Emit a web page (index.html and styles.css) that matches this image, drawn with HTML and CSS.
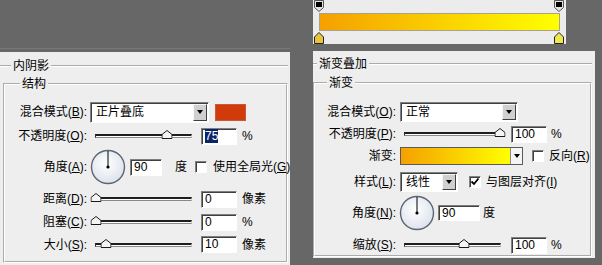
FILE: index.html
```html
<!DOCTYPE html>
<html lang="zh-CN">
<head>
<meta charset="utf-8">
<title>图层样式</title>
<link rel="stylesheet" href="styles.css">
</head>
<body>
<div class="lcol">
  <div class="panel left">
    <fieldset class="outer">
      <legend>内阴影</legend>
      <fieldset class="group">
        <legend>结构</legend>
        <div class="rows">
          <div class="row l1">
            <span class="lbl">混合模式(<u>B</u>):</span>
            <div class="dd dd-blend"><span class="dd-text">正片叠底</span><span class="dd-btn"></span></div>
            <span class="swatch"></span>
          </div>
          <div class="row l2">
            <span class="lbl">不透明度(<u>O</u>):</span>
            <div class="slider"><svg class="thumb" style="left:75%" width="11" height="9" viewBox="0 0 11 9"><path d="M5.5 .5 10.5 4.5V8.5H.5V4.5Z" fill="#f4f4f4" stroke="#1a1a1a"/></svg></div>
            <div class="field num"><span class="sel">75</span></div>
            <span class="unit">%</span>
          </div>
          <div class="row l3">
            <span class="lbl">角度(<u>A</u>):</span>
            <svg class="dial" width="36" height="36" viewBox="0 0 36 36"><defs><radialGradient id="dg1" cx="45%" cy="40%" r="60%"><stop offset="0" stop-color="#ffffff"/><stop offset="1" stop-color="#dde3ec"/></radialGradient></defs><circle cx="18" cy="18" r="16.5" fill="url(#dg1)" stroke="#5b6575" stroke-width="1.4"/><path d="M18 18V2" stroke="#000"/><circle cx="18" cy="18" r="1.6"/></svg>
            <div class="field ang"><span>90</span></div>
            <span class="deg">度</span>
            <span class="cb cb-global"></span>
            <span class="cbl">使用全局光(<u>G</u>)</span>
          </div>
          <div class="row l4">
            <span class="lbl">距离(<u>D</u>):</span>
            <div class="slider"><svg class="thumb" style="left:0%" width="11" height="9" viewBox="0 0 11 9"><path d="M5.5 .5 10.5 4.5V8.5H.5V4.5Z" fill="#f4f4f4" stroke="#1a1a1a"/></svg></div>
            <div class="field num"><span>0</span></div>
            <span class="unit">像素</span>
          </div>
          <div class="row l5">
            <span class="lbl">阻塞(<u>C</u>):</span>
            <div class="slider"><svg class="thumb" style="left:0%" width="11" height="9" viewBox="0 0 11 9"><path d="M5.5 .5 10.5 4.5V8.5H.5V4.5Z" fill="#f4f4f4" stroke="#1a1a1a"/></svg></div>
            <div class="field num"><span>0</span></div>
            <span class="unit">%</span>
          </div>
          <div class="row l6">
            <span class="lbl">大小(<u>S</u>):</span>
            <div class="slider"><svg class="thumb" style="left:10%" width="11" height="9" viewBox="0 0 11 9"><path d="M5.5 .5 10.5 4.5V8.5H.5V4.5Z" fill="#f4f4f4" stroke="#1a1a1a"/></svg></div>
            <div class="field num"><span>10</span></div>
            <span class="unit">像素</span>
          </div>
        </div>
      </fieldset>
    </fieldset>
  </div>
</div>

<div class="rcol">
  <div class="grad-editor">
    <div class="stops">
      <svg width="10" height="12" viewBox="0 0 10 12"><path d="M.5 .5H9.5V7.5L5 11.5 .5 7.5Z" fill="#e4e4e4" stroke="#555"/><rect x="2" y="2" width="6" height="5" fill="#000"/></svg>
      <svg width="10" height="12" viewBox="0 0 10 12"><path d="M.5 .5H9.5V7.5L5 11.5 .5 7.5Z" fill="#e4e4e4" stroke="#555"/><rect x="2" y="2" width="6" height="5" fill="#000"/></svg>
    </div>
    <div class="grad-bar"></div>
    <div class="stops">
      <svg width="10" height="12" viewBox="0 0 10 12"><path d="M5 .5 9.5 5V11.5H.5V5Z" fill="#e8c43c" stroke="#222"/></svg>
      <svg width="10" height="12" viewBox="0 0 10 12"><path d="M5 .5 9.5 5V11.5H.5V5Z" fill="#eee84a" stroke="#222"/></svg>
    </div>
  </div>

  <div class="panel right">
    <fieldset class="outer">
      <legend>渐变叠加</legend>
      <fieldset class="group">
        <legend>渐变</legend>
        <div class="rows">
          <div class="row r1">
            <span class="lbl">混合模式(<u>O</u>):</span>
            <div class="dd dd-normal"><span class="dd-text">正常</span><span class="dd-btn"></span></div>
          </div>
          <div class="row r2">
            <span class="lbl">不透明度(<u>P</u>):</span>
            <div class="slider"><svg class="thumb" style="left:100%" width="11" height="9" viewBox="0 0 11 9"><path d="M5.5 .5 10.5 4.5V8.5H.5V4.5Z" fill="#f4f4f4" stroke="#1a1a1a"/></svg></div>
            <div class="field num"><span>100</span></div>
            <span class="unit">%</span>
          </div>
          <div class="row r3">
            <span class="lbl">渐变:</span>
            <div class="grad-pick"><span class="grad-fill"></span><span class="grad-arrow"></span></div>
            <span class="cb cb-rev"></span>
            <span class="cbl">反向(<u>R</u>)</span>
          </div>
          <div class="row r4">
            <span class="lbl">样式(<u>L</u>):</span>
            <div class="dd dd-style"><span class="dd-text">线性</span><span class="dd-btn"></span></div>
            <span class="cb cb-align"><svg width="10" height="10" viewBox="0 0 10 10"><path d="M1.5 4.5 4 7 8.5 1.5" fill="none" stroke="#000" stroke-width="1.8"/></svg></span>
            <span class="cbl">与图层对齐(<u>I</u>)</span>
          </div>
          <div class="row r5">
            <span class="lbl">角度(<u>N</u>):</span>
            <svg class="dial" width="36" height="36" viewBox="0 0 36 36"><defs><radialGradient id="dg2" cx="45%" cy="40%" r="60%"><stop offset="0" stop-color="#ffffff"/><stop offset="1" stop-color="#dde3ec"/></radialGradient></defs><circle cx="18" cy="18" r="16.5" fill="url(#dg2)" stroke="#5b6575" stroke-width="1.4"/><path d="M18 18V2" stroke="#000"/><circle cx="18" cy="18" r="1.6"/></svg>
            <div class="field ang"><span>90</span></div>
            <span class="deg">度</span>
          </div>
          <div class="row r6">
            <span class="lbl">缩放(<u>S</u>):</span>
            <div class="slider"><svg class="thumb" style="left:62%" width="11" height="9" viewBox="0 0 11 9"><path d="M5.5 .5 10.5 4.5V8.5H.5V4.5Z" fill="#f4f4f4" stroke="#1a1a1a"/></svg></div>
            <div class="field num"><span>100</span></div>
            <span class="unit">%</span>
          </div>
        </div>
      </fieldset>
    </fieldset>
  </div>
</div>
</body>
</html>
```
FILE: styles.css
```css
* { box-sizing: border-box; }
html, body { margin: 0; }
body {
  width: 602px;
  height: 265px;
  overflow: hidden;
  background: #676767;
  font: 12px/16px "Liberation Sans", "Noto Sans CJK SC", sans-serif;
  color: #000;
  display: flex;
  align-items: flex-start;
}
u { text-decoration: underline; text-underline-offset: 1px; }

.lcol {
  margin-top: 48px;
  border-top: 1px solid #7a7a7a;
  padding-top: 3px;
}
.panel { background: #eeeeee; }
.left {
  width: 290px;
  height: 213px;
  padding: 6px 2px 0 0;
}
.rcol {
  margin-left: 23px;
  display: flex;
  flex-direction: column;
}
.right {
  width: 282px;
  height: 207px;
  margin-top: 7px;
  padding: 5px 3px 0 0;
}

fieldset {
  margin: 0;
  padding: 0;
  min-width: 0;
  border: 2px groove #ffffff;
}
legend { padding: 0 2px; line-height: 16px; }
.outer { border-width: 2px 0 0 0; }

.left .outer > legend { margin-left: 11px; }
.left .group { margin: 2px 0 0 3px; height: 187px; }
.left .group > legend { margin-left: 15px; }
.left .rows { padding-top: 9px; }
.left .lbl { width: 82px; margin-right: 3px; }

.right .outer > legend { margin-left: 4px; }
.right .group { margin: 3px 0 0 0; height: 182px; }
.right .group > legend { margin-left: 12px; }
.right .rows { padding-top: 10px; }
.right .lbl { width: 81px; margin-right: 4px; }

.row { display: flex; align-items: center; }
.lbl { flex: none; text-align: right; white-space: nowrap; }

.l1 { height: 22px; }
.l2 { height: 26px; }
.l3 { height: 36px; }
.l4 { height: 28px; }
.l5 { height: 18px; }
.l6 { height: 27px; }

.r1 { height: 22px; }
.r2 { height: 22px; }
.r3 { height: 22px; }
.r4 { height: 29px; }
.r5 { height: 33px; }
.r6 { height: 32px; }

/* sunken controls */
.field, .dd, .cb {
  background: #fff;
  border: 1px solid;
  border-color: #808080 #ffffff #ffffff #808080;
  box-shadow: inset 1px 1px 0 #404040;
  flex: none;
}
.field {
  height: 17px;
  padding-left: 3px;
  line-height: 14px;
  white-space: nowrap;
}
.field.num { width: 36px; margin-left: 9px; }
.right .field.num { width: 36px; margin-left: 10px; }
.field.ang { width: 32px; margin-left: 4px; }
.right .field.ang { width: 42px; height: 16px; margin-left: 3px; }
.sel { background: #0a246a; color: #fff; display: inline-block; line-height: 14px; }

.unit { margin-left: 5px; white-space: nowrap; }
.right .unit { margin-left: 4px; }
.deg { margin-left: 13px; }
.right .deg { margin-left: 3px; }

/* dropdowns */
.dd { display: flex; height: 21px; padding: 1px 1px 1px 2px; }
.dd-blend { width: 119px; }
.dd-normal { width: 118px; height: 20px; }
.dd-style { width: 58px; height: 20px; }
.dd-text { flex: 1; padding-left: 3px; line-height: 16px; white-space: nowrap; }
.dd-btn {
  width: 14px;
  background: #d0d0d0;
  border: 1px solid;
  border-color: #f6f6f6 #404040 #404040 #f6f6f6;
  display: flex;
  align-items: center;
  justify-content: center;
}
.dd-btn::after {
  content: "";
  border-top: 4px solid #000;
  border-left: 3.5px solid transparent;
  border-right: 3.5px solid transparent;
}

.swatch {
  width: 31px;
  height: 17px;
  margin-left: 6px;
  background: #d13b0b;
  border: 1px solid #c65a34;
}

/* sliders */
.slider {
  position: relative;
  flex: none;
  width: 97px;
  height: 4px;
  margin-left: 5px;
  background: #fff;
  border-top: 2px solid #1e1e1e;
  border-bottom: 1px solid #8a8a8a;
  border-left: 1px solid #333;
  border-right: 1px solid #cfcfcf;
}
.right .slider { margin-left: 4px; }
.thumb {
  position: absolute;
  top: -6px;
  transform: translateX(-50%);
  display: block;
}

/* dial */
.dial { flex: none; display: block; }
.right .dial { margin-left: -1px; }

/* checkboxes */
.cb {
  width: 12px;
  height: 12px;
  display: flex;
  align-items: center;
  justify-content: center;
}
.cb-global { margin-left: 8px; }
.cb-rev { margin-left: 9px; }
.cb-align { margin-left: 11px; }
.cbl { margin-left: 5px; white-space: nowrap; }
.cb-global + .cbl { margin-left: 6px; }

/* gradient picker row */
.grad-pick {
  flex: none;
  display: flex;
  width: 123px;
  height: 18px;
  border: 1px solid #5a5a5a;
  background: #fff;
}
.grad-fill {
  flex: 1;
  background: linear-gradient(90deg, #f5a000, #ffff00);
}
.grad-arrow {
  width: 12px;
  border-left: 1px solid #8a8a8a;
  background: #f4f4f4;
  display: flex;
  align-items: center;
  justify-content: center;
}
.grad-arrow::after {
  content: "";
  border-top: 4px solid #000;
  border-left: 3.5px solid transparent;
  border-right: 3.5px solid transparent;
}

/* gradient editor */
.grad-editor {
  width: 253px;
  height: 44px;
  background: #ececec;
  display: flex;
  flex-direction: column;
}
.stops {
  height: 12px;
  display: flex;
  justify-content: space-between;
  padding: 0 2px 0 1px;
}
.stops svg { display: block; }
.grad-bar {
  height: 18px;
  margin: 1px 6px 1px 6px;
  border: 1px solid #a8a090;
  background: linear-gradient(90deg, #f5a000, #ffff00);
}
```
